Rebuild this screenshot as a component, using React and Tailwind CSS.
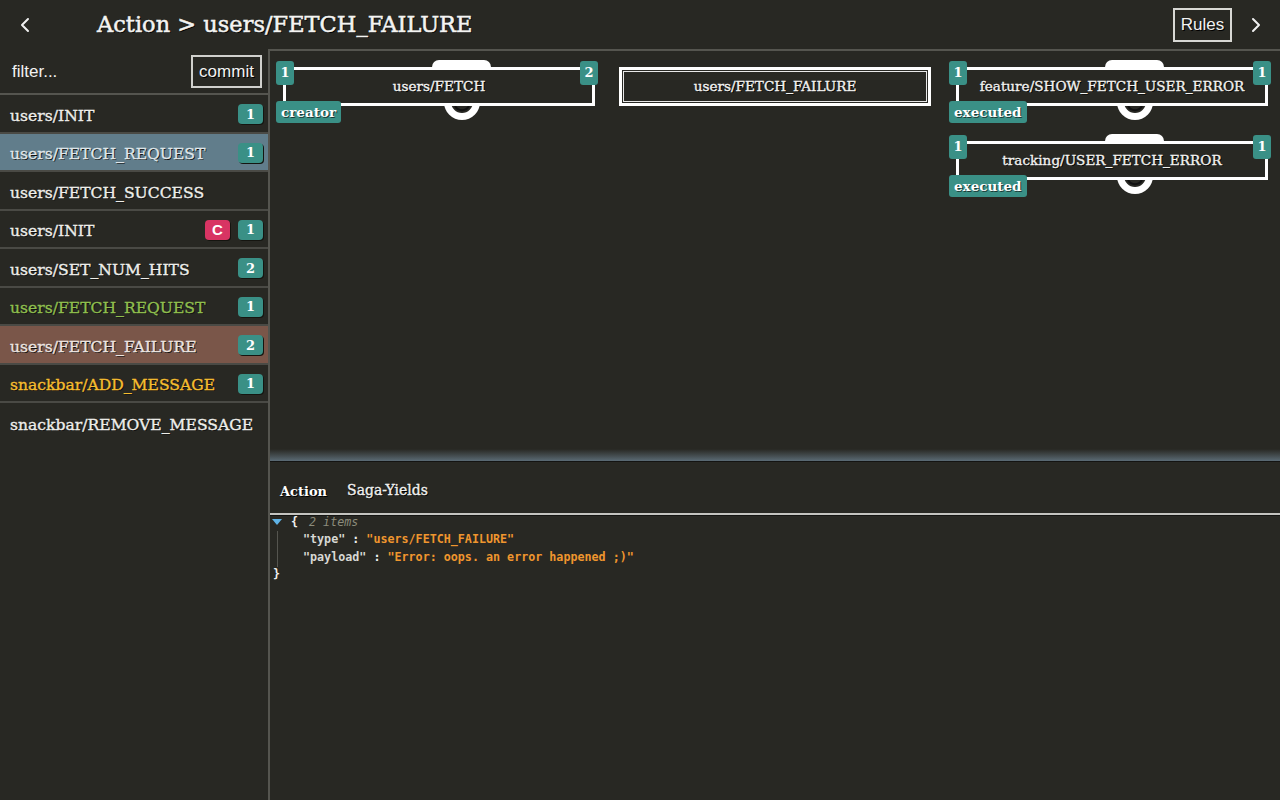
import React from "react";

const slab = "font-['DejaVu_Serif',serif]";
const sans = "font-['Liberation_Sans',Arial,sans-serif]";
const mono = "font-['DejaVu_Sans_Mono',monospace]";

const rows = [
  { label: "users/INIT", badges: ["1"], cls: "text-[#eeeeea]" },
  { label: "users/FETCH_REQUEST", badges: ["1"], cls: "text-[#dfe6ea] bg-[#617d8b]" },
  { label: "users/FETCH_SUCCESS", badges: [], cls: "text-[#eeeeea]" },
  { label: "users/INIT", badges: ["C", "1"], cls: "text-[#eeeeea]" },
  { label: "users/SET_NUM_HITS", badges: ["2"], cls: "text-[#eeeeea]" },
  { label: "users/FETCH_REQUEST", badges: ["1"], cls: "text-[#8fbf4e]" },
  { label: "users/FETCH_FAILURE", badges: ["2"], cls: "text-[#ece4e0] bg-[#7a5649]" },
  { label: "snackbar/ADD_MESSAGE", badges: ["1"], cls: "text-[#f6bd2f]" },
  { label: "snackbar/REMOVE_MESSAGE", badges: [], cls: "text-[#eeeeea]", last: true },
];

function Badge({ v }) {
  const c = v === "C" ? `bg-[#d83463] ${sans} text-[15px]` : `bg-[#3a9086] ${slab} text-[13px]`;
  return (
    <span
      className={`${c} font-bold text-white w-[25px] h-[20px] rounded-[4px] flex items-center justify-center shadow-[1px_1px_0_#151510]`}
    >
      {v}
    </span>
  );
}

function Row({ r }) {
  return (
    <div
      className={`h-[38.5px] flex items-center pt-[6px] pl-[10px] pr-[5px] ${r.last ? "" : "border-b-2 border-[#4a4a45]"} ${r.cls}`}
    >
      <span className={`${slab} text-[15.6px] flex-1 [text-shadow:1px_1px_0_#111] [-webkit-text-stroke:0.35px_currentColor]`}>
        {r.label}
      </span>
      <div className="flex gap-[8px] -mt-[4px]">
        {r.badges.map((b, i) => (
          <Badge key={i} v={b} />
        ))}
      </div>
    </div>
  );
}

function Port({ v, cls }) {
  return (
    <div
      className={`absolute top-0 w-[18px] h-[24px] rounded-[3px] bg-[#3a9086] text-white ${slab} font-bold text-[13px] flex items-center justify-center ${cls}`}
    >
      {v}
    </div>
  );
}

function Ring() {
  return (
    <svg className="absolute left-[167px] top-[41px]" width="38" height="20" viewBox="0 0 38 20">
      <path d="M1 0 A18 18 0 0 0 37 0 Z" fill="#ffffff" />
      <path d="M8 0 A11 11 0 0 0 30 0 Z" fill="#282823" />
      <path d="M12 4 A8 8 0 0 0 26 4" fill="none" stroke="#111" strokeWidth="2" />
    </svg>
  );
}

function Node({ pos, label, left, right, badge }) {
  return (
    <div className={`absolute w-[326px] h-[64px] ${pos}`}>
      <div className="absolute left-[156px] top-[-1px] w-[59px] h-[10px] bg-white rounded-t-[7px]" />
      <Ring />
      <div
        className={`absolute left-[7px] top-[6px] w-[312px] h-[39px] border-[3px] border-white bg-[#282823] flex items-center justify-center ${slab} text-[13.6px] text-[#f2f2f0] [text-shadow:1px_1px_0_#000] [-webkit-text-stroke:0.35px_currentColor]`}
      >
        {label}
      </div>
      <Port v={left} cls="left-0" />
      <Port v={right} cls="left-[304px]" />
      <div
        className={`absolute left-0 top-[40px] h-[22px] px-[5px] rounded-[3px] bg-[#3a9086] text-white ${slab} font-bold text-[13.5px] flex items-center [text-shadow:1px_1px_0_#1a3a36]`}
      >
        {badge}
      </div>
    </div>
  );
}

export default function App() {
  return (
    <div className="w-[1280px] h-[800px] bg-[#282823] flex flex-col overflow-hidden text-[#eeeeea]">
      {/* header */}
      <div className="h-[49px] flex items-center shrink-0">
        <div className="w-[50px] flex justify-center">
          <svg width="12" height="16" viewBox="0 0 12 16">
            <path d="M9 2 L3 8 L9 14" fill="none" stroke="#f0f0f0" strokeWidth="2" strokeLinecap="round" strokeLinejoin="round" />
          </svg>
        </div>
        <div
          className={`ml-[47px] ${slab} text-[22.5px] text-[#f4f4f2] [text-shadow:1px_1px_0_#000] [-webkit-text-stroke:0.5px_currentColor] flex-1`}
        >
          Action &gt; users/FETCH_FAILURE
        </div>
        <div
          className={`h-[34px] w-[59px] border-2 border-[#d8d8d4] flex items-center justify-center ${sans} text-[17px] text-[#f2f2f2] [text-shadow:1px_1px_0_#000]`}
        >
          Rules
        </div>
        <div className="w-[48px] flex justify-center">
          <svg width="12" height="16" viewBox="0 0 12 16">
            <path d="M3 2 L9 8 L3 14" fill="none" stroke="#f0f0f0" strokeWidth="2" strokeLinecap="round" strokeLinejoin="round" />
          </svg>
        </div>
      </div>

      <div className="flex flex-1 min-h-0">
        {/* sidebar */}
        <div className="w-[268px] shrink-0 flex flex-col">
          <div className="h-[46px] flex items-center justify-between pl-[12px] pr-[6px] border-b-2 border-[#55554f] pt-[1px]">
            <span className={`${sans} text-[17px] text-[#f2f2f2]`}>filter...</span>
            <div
              className={`h-[33px] w-[71px] border-2 border-[#d0d0cc] flex items-center justify-center ${sans} text-[17px] text-[#f2f2f2] [text-shadow:1px_1px_0_#000]`}
            >
              commit
            </div>
          </div>
          {rows.map((r, i) => (
            <Row key={i} r={r} />
          ))}
        </div>

        {/* main */}
        <div className="flex-1 flex flex-col border-l-2 border-t-2 border-[#55554f] min-w-0">
          <div className="relative h-[398px] shrink-0">
            <Node pos="left-[6px] top-[10px]" label="users/FETCH" left="1" right="2" badge="creator" />
            <div
              className={`absolute left-[349px] top-[16px] w-[312px] h-[39px] border-[3px] border-white shadow-[inset_0_0_0_1px_#282823,inset_0_0_0_2px_#e8e8e8] flex items-center justify-center ${slab} text-[13.6px] text-[#f2f2f0] [text-shadow:1px_1px_0_#000] [-webkit-text-stroke:0.35px_currentColor]`}
            >
              users/FETCH_FAILURE
            </div>
            <Node pos="left-[679px] top-[10px]" label="feature/SHOW_FETCH_USER_ERROR" left="1" right="1" badge="executed" />
            <Node pos="left-[679px] top-[84px]" label="tracking/USER_FETCH_ERROR" left="1" right="1" badge="executed" />
          </div>
          <div className="h-[12px] shrink-0 bg-linear-to-b from-[#282823] to-[#5b6b75]" />
          <div className="h-[1px] shrink-0 bg-[#141412]" />
          {/* tabs */}
          <div className="h-[53px] shrink-0 flex items-end gap-[20px] pl-[10px] pb-[12px] border-b-2 border-[#c4c4c0]">
            <span className={`${slab} font-bold text-[13px] text-white [text-shadow:1px_1px_0_#000]`}>Action</span>
            <span className={`${slab} text-[14px] text-[#f0f0ee] [text-shadow:1px_1px_0_#000] [-webkit-text-stroke:0.35px_currentColor]`}>
              Saga-Yields
            </span>
          </div>
          <div className="h-[1px] bg-[#141412]" />
          {/* json */}
          <div className={`${mono} text-[11.7px] leading-[17.3px] font-bold pl-[2px] relative -mt-[2px]`}>
            <div className="flex items-center">
              <svg width="10" height="8" viewBox="0 0 10 8" className="mr-[9px]">
                <path d="M0 0 L10 0 L5 6 Z" fill="#5fb3e6" />
              </svg>
              <span className="text-[#f0f0f0]">{"{"}</span>
              <span className="ml-[11px] italic font-normal text-[#8c8c7c]">2 items</span>
            </div>
            <div className="absolute left-[7px] top-[17px] w-[1px] h-[36px] bg-[#55554f]" />
            <div className="pl-[31px]">
              <span className="text-[#d8d8d4]">"type"</span>
              <span className="text-[#f0f0f0]"> : </span>
              <span className="text-[#f0962e]">"users/FETCH_FAILURE"</span>
            </div>
            <div className="pl-[31px]">
              <span className="text-[#d8d8d4]">"payload"</span>
              <span className="text-[#f0f0f0]"> : </span>
              <span className="text-[#f0962e]">"Error: oops. an error happened ;)"</span>
            </div>
            <div className="pl-[1px] text-[#f0f0f0]">{"}"}</div>
          </div>
        </div>
      </div>
    </div>
  );
}
